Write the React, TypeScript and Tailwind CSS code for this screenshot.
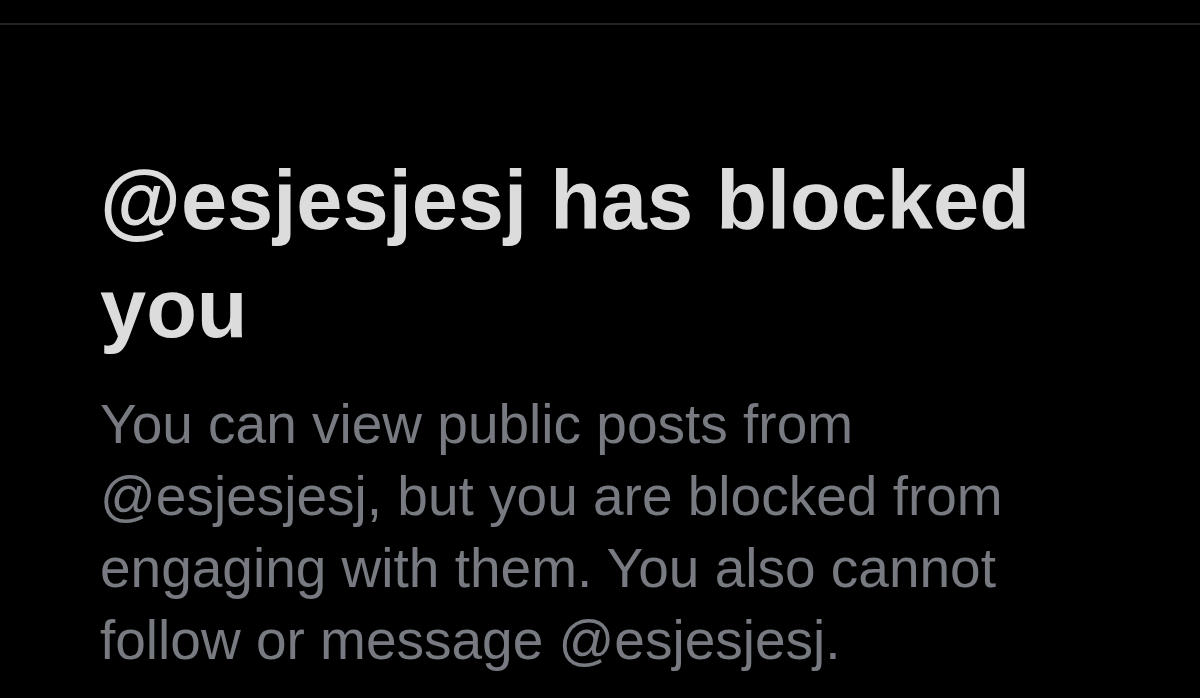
export default function App() {
  return (
    <div className="w-[1200px] h-[698px] bg-black overflow-hidden font-['Liberation_Sans',Arial,sans-serif]">
      {/* top divider */}
      <div className="h-[23px]" />
      <div className="h-[2px] bg-[#202327]" />

      <div className="pt-[122px] pl-[100px] pr-[100px]">
        <h1 className="text-[83px] leading-[108px] font-bold text-[#dcdcdc]">
          @esjesjesj has blocked you
        </h1>
        <p className="mt-[25px] text-[55px] leading-[72px] text-[#777a80]">
          You can view public posts from @esjesjesj, but you are blocked from engaging with them. You also cannot follow or message @esjesjesj.
        </p>
      </div>
    </div>
  );
}
